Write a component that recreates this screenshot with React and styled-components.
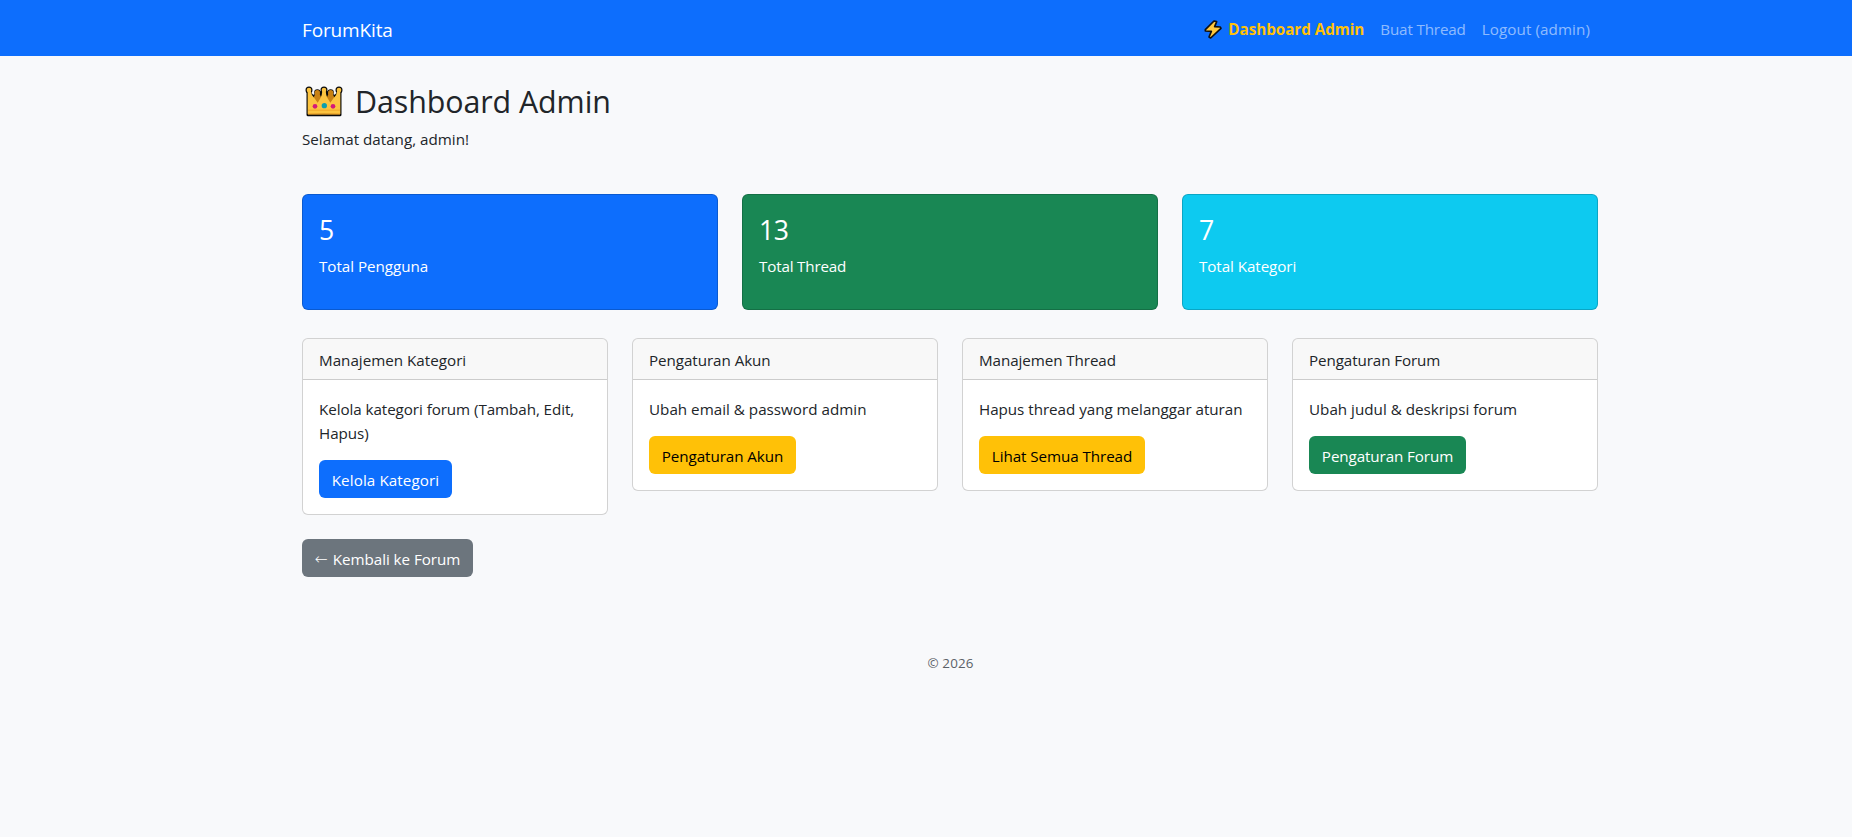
import React from 'react';
import styled, { createGlobalStyle } from 'styled-components';

const GlobalStyle = createGlobalStyle`
  *, *::before, *::after { box-sizing: border-box; }
  body {
    margin: 0;
    min-height: 100vh;
    background: #f8f9fb;
    color: #212529;
    font-family: "Open Sans", "Noto Sans", sans-serif;
    font-size: 15.2px;
    line-height: 24px;
  }
  h2, h3, p { margin: 0; font-weight: 400; }
  a { text-decoration: none; }
`;

const Navbar = styled.nav`
  height: 56px;
  padding-left: 48px;
  background: #0d6efd;
`;

const Container = styled.div`
  width: 1320px;
  margin: 0 auto;
  padding: 0 12px;
`;

const NavInner = styled(Container)`
  display: flex;
  align-items: center;
  justify-content: space-between;
  height: 56px;
`;

const Brand = styled.a`
  padding-top: 3px;
  font-size: 19px;
  line-height: 30px;
  letter-spacing: -0.14px;
  color: #fff;
`;

const NavLinks = styled.div`
  display: flex;
`;

const NavLink = styled.a`
  display: flex;
  align-items: center;
  padding: 9px 8px 7px;
  white-space: nowrap;
  color: ${(p) => (p.$active ? '#ffc107' : 'rgba(255, 255, 255, 0.55)')};
  font-weight: ${(p) => (p.$active ? 700 : 400)};
  letter-spacing: ${(p) => p.$spacing || 0}px;
`;

const BoltSvg = styled.svg`
  width: 20px;
  height: 20px;
  margin: 0 5px 0 0;
`;

const Main = styled.main`
  padding: 24px 0 0 48px;
`;

const Title = styled.h2`
  display: flex;
  align-items: flex-start;
  height: 38.4px;
  margin-bottom: 8px;
  font-size: 30.4px;
  line-height: 38.4px;
  letter-spacing: -0.08px;

  span { padding-top: 3px; }
`;

const CrownSvg = styled.svg`
  width: 38px;
  height: 31.33px;
  margin: 6px 12px 0 3px;
`;

const Copy = styled.p`
  padding-top: 1px;
  margin-bottom: ${(p) => (p.$gap || 0) - 1}px;
  letter-spacing: ${(p) => p.$spacing || 0}px;
`;

const StatRow = styled.div`
  display: grid;
  grid-template-columns: repeat(3, 1fr);
  gap: 24px;
  margin: 43.6px 0 28px;
`;

const StatCard = styled.div`
  height: 116px;
  padding: 16px;
  border: 1px solid rgba(0, 0, 0, 0.175);
  border-radius: 6px;
  background: ${(p) => p.$color};
  background-clip: border-box;
  color: #fff;
`;

const StatValue = styled.h3`
  height: 33.6px;
  margin-bottom: 8px;
  padding-top: 3px;
  font-size: 26.6px;
  line-height: 33.6px;
  letter-spacing: -0.4px;
`;

const PanelRow = styled.div`
  display: grid;
  grid-template-columns: repeat(4, 1fr);
  gap: 24px;
  align-items: start;
`;

const Panel = styled.section`
  overflow: hidden;
  border: 1px solid rgba(0, 0, 0, 0.175);
  border-radius: 6px;
  background: #fff;
  background-clip: border-box;
`;

const PanelHeader = styled.div`
  padding: 9px 16px 7px;
  border-bottom: 1px solid rgba(0, 0, 0, 0.175);
  background: rgba(33, 37, 41, 0.03);
  letter-spacing: ${(p) => p.$spacing || 0}px;
`;

const PanelBody = styled.div`
  display: flex;
  flex-direction: column;
  align-items: flex-start;
  padding: 16px;
`;

const Button = styled.a`
  display: inline-flex;
  justify-content: center;
  width: ${(p) => p.$width}px;
  height: 38px;
  padding: 8px 0 0;
  border-radius: 6px;
  background: ${(p) => p.$bg};
  color: ${(p) => p.$fg || '#fff'};
  white-space: nowrap;
  letter-spacing: ${(p) => p.$spacing || 0}px;
`;

const BackButton = styled(Button)`
  margin-top: 24px;
`;

const Arrow = styled.span`
  width: 18px;
  font-family: "DejaVu Sans", sans-serif;
  font-weight: 200;
  font-size: 15.5px;
`;

const Footer = styled.footer`
  margin-top: 76px;
  padding-left: 1px;
  font-size: 13.4px;
  line-height: 21px;
  letter-spacing: 0.15px;
  text-align: center;
  color: #5b6167;
`;

function Bolt() {
  return (
    <BoltSvg viewBox="0 0 60 60" aria-hidden="true">
      <path
        d="M33 6 L7 32 L7 36 L25 37 L18 54 L23 57 L54 28 L52 24 L35 23 L41 8 Z"
        fill="#ffc83d"
        stroke="#111"
        strokeWidth="5"
        strokeLinejoin="round"
      />
    </BoltSvg>
  );
}

function Crown() {
  return (
    <CrownSvg viewBox="0 0 114 94" aria-hidden="true">
      <g stroke="#0b0b0b" strokeWidth="9" strokeLinejoin="round">
        <path d="M9 86 V16 L24 32 L37 26 L57 14 L77 26 L90 32 L105 16 V86 Z" fill="#0b0b0b" />
        <circle cx="12" cy="12" r="6" />
        <circle cx="57" cy="12" r="6" />
        <circle cx="102" cy="12" r="6" />
        <circle cx="37" cy="19" r="5" />
        <circle cx="77" cy="19" r="5" />
      </g>
      <path d="M24 40 L32 20 H42 L51 40 L38 60 Z M63 40 L72 20 H82 L90 40 L76 60 Z" fill="#c98214" />
      <circle cx="37" cy="20" r="8" fill="#c98214" />
      <circle cx="77" cy="20" r="8" fill="#c98214" />
      <path
        d="M8 84 V14 H17 Q19 28 28 36 L38 50 L47 35 Q51 28 52 14 H62 Q63 28 67 35 L76 50 L86 36 Q95 28 97 14 H106 V84 Q57 82 8 84 Z"
        fill="#fcc440"
      />
      <circle cx="12" cy="12" r="7" fill="#fcc440" />
      <circle cx="57" cy="12" r="7" fill="#fcc440" />
      <circle cx="102" cy="12" r="7" fill="#fcc440" />
      <path d="M9 71 H105 V74 H9 Z" fill="#f0a62a" />
      <path d="M9 82 H105 V86 H9 Z" fill="#f0a62a" />
      <circle cx="30" cy="61" r="7" fill="#d51a78" />
      <circle cx="58" cy="59" r="8" fill="#0c9fae" />
      <circle cx="84" cy="61" r="7" fill="#d51a78" />
    </CrownSvg>
  );
}

const stats = [
  { value: '5', label: 'Total Pengguna', color: '#0d6efd', spacing: -0.04 },
  { value: '13', label: 'Total Thread', color: '#198754', spacing: -0.17 },
  { value: '7', label: 'Total Kategori', color: '#0dcaf0', spacing: -0.07 },
];

const panels = [
  {
    title: 'Manajemen Kategori', titleSpacing: 0,
    text: 'Kelola kategori forum (Tambah, Edit, Hapus)', textSpacing: -0.07,
    action: 'Kelola Kategori', actionSpacing: 0.1, width: 133, bg: '#0d6efd',
  },
  {
    title: 'Pengaturan Akun', titleSpacing: -0.06,
    text: 'Ubah email & password admin', textSpacing: 0.01,
    action: 'Pengaturan Akun', actionSpacing: -0.06, width: 147, bg: '#ffc107', fg: '#000',
  },
  {
    title: 'Manajemen Thread', titleSpacing: -0.08,
    text: 'Hapus thread yang melanggar aturan', textSpacing: -0.03,
    action: 'Lihat Semua Thread', actionSpacing: -0.07, width: 166, bg: '#ffc107', fg: '#000',
  },
  {
    title: 'Pengaturan Forum', titleSpacing: -0.1,
    text: 'Ubah judul & deskripsi forum', textSpacing: 0.01,
    action: 'Pengaturan Forum', actionSpacing: -0.1, width: 157, bg: '#198754',
  },
];

export default function App() {
  return (
    <>
      <GlobalStyle />
      <Navbar>
        <NavInner>
          <Brand>ForumKita</Brand>
          <NavLinks>
            <NavLink $active $spacing={-0.01}>
              <Bolt />
              Dashboard Admin
            </NavLink>
            <NavLink $spacing={-0.15}>Buat Thread</NavLink>
            <NavLink $spacing={0.09}>Logout (admin)</NavLink>
          </NavLinks>
        </NavInner>
      </Navbar>
      <Main>
        <Container>
          <Title>
            <Crown />
            <span>Dashboard Admin</span>
          </Title>
          <Copy>Selamat datang, admin!</Copy>
          <StatRow>
            {stats.map((s) => (
              <StatCard key={s.label} $color={s.color}>
                <StatValue>{s.value}</StatValue>
                <Copy $spacing={s.spacing}>{s.label}</Copy>
              </StatCard>
            ))}
          </StatRow>
          <PanelRow>
            {panels.map((p) => (
              <Panel key={p.title}>
                <PanelHeader $spacing={p.titleSpacing}>{p.title}</PanelHeader>
                <PanelBody>
                  <Copy $gap={16} $spacing={p.textSpacing}>{p.text}</Copy>
                  <Button $bg={p.bg} $fg={p.fg} $width={p.width} $spacing={p.actionSpacing}>
                    {p.action}
                  </Button>
                </PanelBody>
              </Panel>
            ))}
          </PanelRow>
          <BackButton $bg="#6c757d" $width={171} $spacing={-0.05}>
            <Arrow>←</Arrow>
            Kembali ke Forum
          </BackButton>
          <Footer>© 2026</Footer>
        </Container>
      </Main>
    </>
  );
}
